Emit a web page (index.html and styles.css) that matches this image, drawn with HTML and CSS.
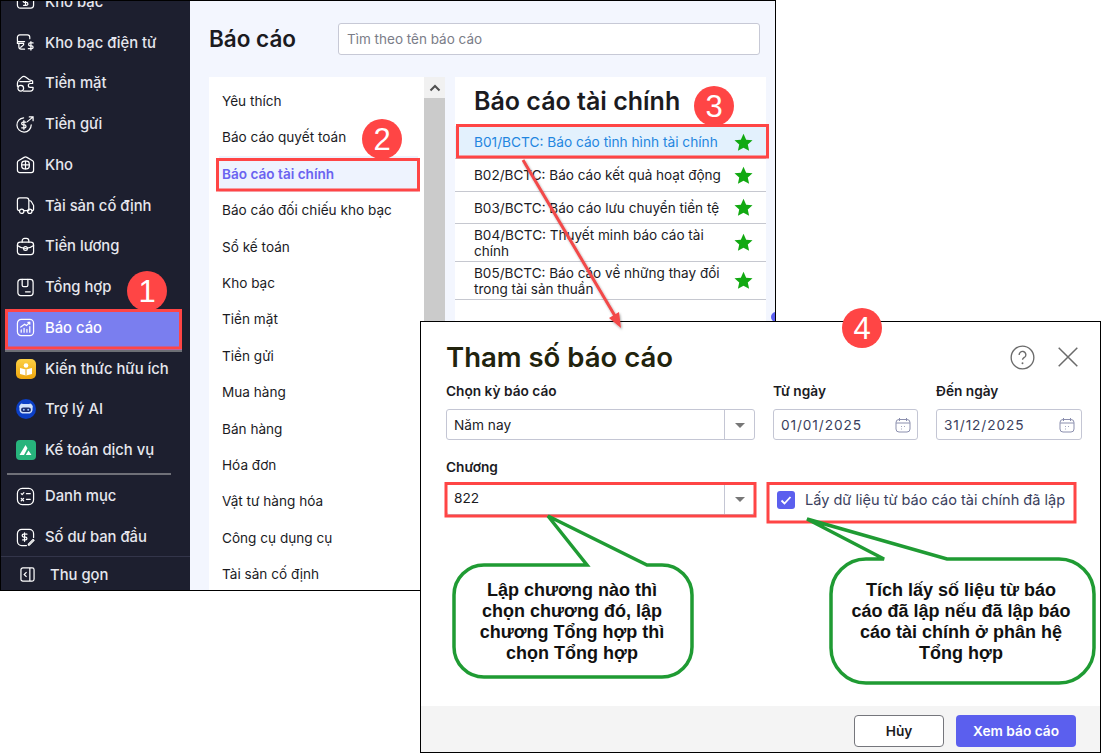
FILE: index.html
```html
<!DOCTYPE html>
<html lang="vi">
<head>
    <meta charset="UTF-8">
    <title>Báo cáo</title>
    <link rel="stylesheet" href="styles.css">
</head>
<body>
<div class="canvas">
    <div class="app">
        <nav class="sidebar">
            <div class="menu">
                <a class="menu-item"><svg class="ico" viewBox="0 0 20 20"><rect x="1.500" y="3" width="17" height="14" rx="3"/><path d="M10 6v8M12 8H9a1.200 1.200 0 000 3h2a1.200 1.200 0 010 3H8"/></svg>Kho bạc</a>
                <a class="menu-item"><svg class="ico" viewBox="0 0 20 20"><path d="M12 2H4a2.500 2.500 0 00-2.500 2.500V8a1 1 0 001 1h6.500M1.500 9v2H8v1.500L5 15M3 11v3.500A2.500 2.500 0 005.500 17H9M12 2a2.500 2.500 0 012.500 2.500V6"/><path d="M18 10.500h-3.200a1.500 1.500 0 000 3h1.700a1.500 1.500 0 010 3H13M15.700 9v9"/></svg>Kho bạc điện tử</a>
                <a class="menu-item"><svg class="ico" viewBox="0 0 20 20"><path d="M1.500 13V10c0-1.500.5-2.500 1.500-3.500l3-3c1.500-1.500 3-1.500 4.500 0L14 6c1 .5 2 .5 3.500 1.500v2.500h-2.500a2 2 0 000 4h3v1a3 3 0 01-3 3H8M4 8h11"/><circle cx="5" cy="15" r="3"/></svg>Tiền mặt</a>
                <a class="menu-item"><svg class="ico" viewBox="0 0 20 20"><path d="M16 10.500a7.500 7.500 0 11-8-7.500M12 7l6-5M14 2h4v4"/><path d="M10.500 7.500H7.500a1.200 1.200 0 000 3h1.500a1.200 1.200 0 010 3H6M8.300 6v9"/></svg>Tiền gửi</a>
                <a class="menu-item"><svg class="ico" viewBox="0 0 20 20"><path d="M1.500 16V8c0-1 .4-1.600 1-2L8.500 2.500a3 3 0 013 0L17.500 6c.6.400 1 1 1 2v8a2.500 2.500 0 01-2.500 2.500H4A2.500 2.500 0 011.500 16z"/><rect x="6" y="6.500" width="8" height="8" rx="3"/><path d="M10 6.500v8M6 10.500h8"/></svg>Kho</a>
                <a class="menu-item"><svg class="ico" viewBox="0 0 20 20"><path d="M3.500 15.500A2.300 2.300 0 011.500 13V4.500A2.500 2.500 0 014 2h7a2.500 2.500 0 012.500 2.500v11h-5M13.500 5h1.200c.6 0 1.100.3 1.400.8l2.400 4.200v4a1.500 1.500 0 01-1.500 1.500"/><circle cx="6" cy="16" r="2.300"/><circle cx="14.500" cy="16" r="2.300"/></svg>Tài sản cố định</a>
                <a class="menu-item"><svg class="ico" viewBox="0 0 20 20"><path d="M4.500 5.500h11a3 3 0 013 3v7a3 3 0 01-3 3h-11a3 3 0 01-3-3v-7a3 3 0 013-3z"/><path d="M6.500 5.500V4A2.500 2.500 0 019 1.500h2A2.500 2.500 0 0113.500 4v1.500M1.500 9c3 2.500 5 3 8.500 3s5.500-.5 8.500-3"/><circle cx="10" cy="12" r="2"/></svg>Tiền lương</a>
                <a class="menu-item"><svg class="ico" viewBox="0 0 20 20"><rect x="2" y="1.500" width="16" height="17" rx="3"/><path d="M6.500 1.500v6c0 1 .5 1.500 1.500 1.500h3c1 0 1.500-.5 1.500-1.500v-6M10 14.500h5"/></svg>Tổng hợp</a>
                <a class="menu-item active"><svg class="ico" viewBox="0 0 20 20"><rect x="1.500" y="1.500" width="17" height="17" rx="4"/><path d="M5.500 15v-2.500M8.500 15v-4M11.500 15v-3M14.500 15V9M5 9.500l4-3 2 1.500 3.500-3.500M12.500 4.500h2v2"/></svg>Báo cáo</a>
                <a class="menu-item"><svg class="ico-fill" viewBox="0 0 20 20"><defs><linearGradient id="gold" x1="0" y1="0" x2="0" y2="1"><stop offset="0" stop-color="#fdd044"/><stop offset="1" stop-color="#eda50e"/></linearGradient></defs><rect width="20" height="20" rx="5" fill="url(#gold)"/><path d="M4 9l6 1.500L16 9v6l-6 1.500L4 15z" fill="#fff"/><circle cx="10" cy="6.500" r="2.300" fill="#fff"/><path d="M10 10.500v6" stroke="#eda50e" stroke-width="1"/></svg>Kiến thức hữu ích</a>
                <a class="menu-item"><svg class="ico-fill" viewBox="0 0 20 20"><circle cx="10" cy="10" r="10" fill="#0b3fc6"/><path d="M4 6a2 2 0 013-1h6a2 2 0 013 1c1 1 1 2 .5 3 .5 3-1 5.500-3.500 5.500H7C4.500 14.500 3 12 3.500 9 3 8 3 7 4 6z" fill="#cfe0fb"/><rect x="5" y="8.500" width="10" height="4.500" rx="2.200" fill="#1a2a6b"/><circle cx="7.800" cy="10.700" r="1" fill="#9cc2ff"/><circle cx="12.200" cy="10.700" r="1" fill="#9cc2ff"/></svg>Trợ lý AI</a>
                <a class="menu-item"><svg class="ico-fill" viewBox="0 0 20 20"><rect width="20" height="20" rx="4" fill="#27b47c"/><path d="M3.500 15L9.500 5l2 3.300L8 15zM9.800 15l2.700-4.500L15.500 15z" fill="#fff"/></svg>Kế toán dịch vụ</a>
                <hr class="menu-line">
                <a class="menu-item"><svg class="ico" viewBox="0 0 20 20"><rect x="1.500" y="1.500" width="17" height="17" rx="5"/><path d="M5.500 7l1 1 1.800-2M11 7h4M5.500 14.500l2.500-2.500M5.500 12l2.500 2.500M11 13h4"/></svg>Danh mục</a>
                <a class="menu-item"><svg class="ico" viewBox="0 0 20 20"><path d="M11 18.500H6A4.500 4.500 0 011.500 14V6A4.500 4.500 0 016 1.500h8A4.500 4.500 0 0118.500 6v4"/><path d="M11.500 6.500H8a1.300 1.300 0 000 3h2a1.300 1.300 0 010 3H7M9 5v9M13 17l5-5 1 1-5 5h-1z"/></svg>Số dư ban đầu</a>
            </div>
            <a class="collapse"><svg class="ico-small" viewBox="0 0 16 16"><rect x="1" y="1" width="14" height="14" rx="2"/><path d="M10.500 1v14M7 5.500L4.500 8 7 10.500"/></svg>Thu gọn</a>
        </nav>

        <main class="content">
            <header class="content-head">
                <h1>Báo cáo</h1>
                <div class="search">Tìm theo tên báo cáo</div>
            </header>
            <div class="panels">
                <div class="group-panel">
                    <ul class="group-list">
                        <li>Yêu thích</li>
                        <li>Báo cáo quyết toán</li>
                        <li class="active">Báo cáo tài chính</li>
                        <li>Báo cáo đối chiếu kho bạc</li>
                        <li>Sổ kế toán</li>
                        <li>Kho bạc</li>
                        <li>Tiền mặt</li>
                        <li>Tiền gửi</li>
                        <li>Mua hàng</li>
                        <li>Bán hàng</li>
                        <li>Hóa đơn</li>
                        <li>Vật tư hàng hóa</li>
                        <li>Công cụ dụng cụ</li>
                        <li>Tài sản cố định</li>
                    </ul>
                    <div class="scrollbar"><span class="scroll-up"><svg viewBox="0 0 12 8"><path d="M1.500 6.500L6 2l4.500 4.500"/></svg></span></div>
                </div>
                <div class="report-panel">
                    <h2>Báo cáo tài chính</h2>
                    <div class="report-row active"><span>B01/BCTC: Báo cáo tình hình tài chính</span><svg class="star" viewBox="0 0 20 20"><path d="M10 .8l2.800 6.200 6.700.7-5 4.500 1.400 6.600L10 15.400l-5.900 3.400 1.400-6.600-5-4.500L7.200 7z"/></svg></div>
                    <div class="report-row"><span>B02/BCTC: Báo cáo kết quả hoạt động</span><svg class="star" viewBox="0 0 20 20"><path d="M10 .8l2.800 6.200 6.700.7-5 4.500 1.400 6.600L10 15.400l-5.900 3.400 1.400-6.600-5-4.500L7.200 7z"/></svg></div>
                    <div class="report-row short"><span>B03/BCTC: Báo cáo lưu chuyển tiền tệ</span><svg class="star" viewBox="0 0 20 20"><path d="M10 .8l2.800 6.200 6.700.7-5 4.500 1.400 6.600L10 15.400l-5.900 3.400 1.400-6.600-5-4.500L7.200 7z"/></svg></div>
                    <div class="report-row tall"><span>B04/BCTC: Thuyết minh báo cáo tài chính</span><svg class="star" viewBox="0 0 20 20"><path d="M10 .8l2.800 6.200 6.700.7-5 4.500 1.400 6.600L10 15.400l-5.900 3.400 1.400-6.600-5-4.500L7.200 7z"/></svg></div>
                    <div class="report-row tall"><span>B05/BCTC: Báo cáo về những thay đổi trong tài sản thuần</span><svg class="star" viewBox="0 0 20 20"><path d="M10 .8l2.800 6.200 6.700.7-5 4.500 1.400 6.600L10 15.400l-5.900 3.400 1.400-6.600-5-4.500L7.200 7z"/></svg></div>
                </div>
            </div>
            <span class="blue-dot"></span>
        </main>
    </div>

    <section class="dialog">
        <div class="dialog-body">
            <div class="dialog-head">
                <h3>Tham số báo cáo</h3>
                <div class="dialog-tools">
                    <svg class="tool-help" viewBox="0 0 26 26"><circle cx="13" cy="13" r="11.800"/><path d="M9.500 10.300a3.500 3.500 0 116.600 1.500c-.9 1.200-3.100 1.700-3.100 3.600"/><circle class="dot" cx="13" cy="19" r="1"/></svg>
                    <svg class="tool-close" viewBox="0 0 20 20"><path d="M.7.7l18.600 18.600M19.300.7L.7 19.300"/></svg>
                </div>
            </div>
            <div class="form-row">
                <div class="field wide">
                    <label>Chọn kỳ báo cáo</label>
                    <div class="combo"><span>Năm nay</span><i class="caret"></i></div>
                </div>
                <div class="field date">
                    <label>Từ ngày</label>
                    <div class="datebox"><span>01/01/2025</span><svg class="cal" viewBox="0 0 16 16"><rect x="1" y="2.500" width="14" height="12.500" rx="3"/><path d="M1 6h14M4.500 1v3M11.500 1v3M6 9.500h.8M9 9.500h.8M6 12h.8"/></svg></div>
                </div>
                <div class="field date">
                    <label>Đến ngày</label>
                    <div class="datebox"><span>31/12/2025</span><svg class="cal" viewBox="0 0 16 16"><rect x="1" y="2.500" width="14" height="12.500" rx="3"/><path d="M1 6h14M4.500 1v3M11.500 1v3M6 9.500h.8M9 9.500h.8M6 12h.8"/></svg></div>
                </div>
            </div>
            <div class="form-row second">
                <div class="field wide">
                    <label>Chương</label>
                    <div class="combo"><span>822</span><i class="caret"></i></div>
                </div>
                <div class="check">
                    <span class="checkbox"><svg viewBox="0 0 18 18"><path d="M4.500 9.500l3 3 6-6.500"/></svg></span>
                    Lấy dữ liệu từ báo cáo tài chính đã lập
                </div>
            </div>
        </div>
        <footer class="dialog-foot">
            <button class="btn">Hủy</button>
            <button class="btn primary">Xem báo cáo</button>
        </footer>
    </section>

    <svg class="marks" viewBox="0 0 1101 753">
        <defs>
            <filter id="soft" x="-20%" y="-20%" width="140%" height="140%"><feDropShadow dx="1" dy="1.500" stdDeviation="1.200" flood-color="#000" flood-opacity=".35"/></filter>
        </defs>
        <rect class="red-box" x="6.500" y="310.500" width="174" height="37.500"/>
        <rect class="red-box" x="217.500" y="159.500" width="201" height="30.500"/>
        <rect class="red-box" x="457.500" y="125.500" width="310" height="31.500"/>
        <rect class="red-box" x="446" y="483.500" width="309" height="32.500"/>
        <rect class="red-box" x="768" y="483.500" width="307" height="38.500"/>

        <g filter="url(#soft)">
            <path class="arrow-line" d="M523 160L615 316"/>
            <path class="arrow-head" d="M621 328L609 318L619 312z"/>
        </g>

        <circle class="badge" cx="147" cy="291" r="20"/><text class="badge-num" x="147" y="302">1</text>
        <circle class="badge" cx="382" cy="139" r="20"/><text class="badge-num" x="382" y="150">2</text>
        <circle class="badge" cx="714" cy="106" r="20"/><text class="badge-num" x="714" y="117">3</text>
        <circle class="badge" cx="862" cy="328" r="20"/><text class="badge-num" x="862" y="339">4</text>

        <path class="bubble" d="M548 516L587 565H484A30 30 0 00454 595V647A30 30 0 00484 677H662A30 30 0 00692 647V595A30 30 0 00662 565H647z"/>
        <text class="bubble-text" x="572" y="596">Lập chương nào thì</text>
        <text class="bubble-text" x="572" y="617">chọn chương đó, lập</text>
        <text class="bubble-text" x="572" y="638">chương Tổng hợp thì</text>
        <text class="bubble-text" x="572" y="659">chọn Tổng hợp</text>

        <path class="bubble" d="M807 519L884 559H866A35 35 0 00831 594V648A35 35 0 00866 683H1059A35 35 0 001094 648V594A35 35 0 001059 559H947z"/>
        <text class="bubble-text" x="961" y="596">Tích lấy số liệu từ báo</text>
        <text class="bubble-text" x="961" y="617">cáo đã lập nếu đã lập báo</text>
        <text class="bubble-text" x="961" y="638">cáo tài chính ở phân hệ</text>
        <text class="bubble-text" x="961" y="659">Tổng hợp</text>
    </svg>
</div>
</body>
</html>
```

FILE: styles.css
```css
* {
    box-sizing: border-box;
}

body {
    margin: 0;
    background: #fff;
    font-family: Inter, "Liberation Sans", sans-serif;
    color: #1b1b1f;
}

.canvas {
    position: relative;
    width: 1101px;
    height: 753px;
    overflow: hidden;
}

.app {
    display: flex;
    width: 776px;
    height: 591px;
    border: 1px solid #000;
    overflow: hidden;
}

/* sidebar */
.sidebar {
    display: flex;
    flex-direction: column;
    width: 189px;
    flex-shrink: 0;
    background: #1d1f2f;
    color: #e6e7ee;
    font-size: 14.800px;
    font-weight: 500;
}

.menu {
    flex: 1;
    min-height: 0;
    margin-top: -19.500px;
}

.menu-item {
    display: flex;
    align-items: center;
    gap: 10px;
    height: 40.750px;
    padding-left: 15px;
}

.menu-item.active {
    margin: 2px 8px -2px 4px;
    padding-left: 11px;
    padding-bottom: 4px;
    background: #7a7eef;
    color: #fff;
    box-shadow: 0 2px 0 #6d6f75;
}

.ico {
    width: 19px;
    height: 19px;
    fill: none;
    stroke: #fff;
    stroke-width: 1.300;
    stroke-linecap: round;
    stroke-linejoin: round;
    flex-shrink: 0;
}

.ico-fill {
    width: 20px;
    height: 20px;
    flex-shrink: 0;
    margin-right: -1px;
}

.menu-line {
    height: 2px;
    margin: 2.500px 19px 1px 6px;
    border: 0;
    background: #6f7078;
}

.collapse {
    display: flex;
    align-items: center;
    flex-shrink: 0;
    gap: 15px;
    height: 34px;
    padding-top: 2px;
    padding-left: 19px;
    border-top: 1px solid #33354a;
}

.ico-small {
    width: 15px;
    height: 15px;
    fill: none;
    stroke: #fff;
    stroke-width: 1.300;
}

/* content */
.content {
    position: relative;
    flex: 1;
    padding: 0 9px 0 19px;
    background: #f3f6fe;
}

.content-head {
    display: flex;
    align-items: center;
    height: 76px;
    padding-bottom: 1px;
}

.content-head h1 {
    width: 129px;
    margin: 0;
    font-size: 22.500px;
    font-weight: 600;
}

.search {
    width: 422px;
    height: 32px;
    padding-left: 8px;
    border: 1px solid #c7c9d6;
    border-radius: 3px;
    background: #fff;
    color: #7b7d88;
    font-size: 13.500px;
    line-height: 30px;
}

.panels {
    display: flex;
    gap: 10px;
    height: 514px;
}

.group-panel {
    display: flex;
    width: 236px;
    background: #fff;
}

.group-list {
    flex: 1;
    margin: 0;
    padding: 6px 6px 0 10px;
    list-style: none;
    font-size: 13.600px;
}

.group-list li {
    height: 36.400px;
    padding-left: 3px;
    line-height: 36px;
}

.group-list li.active {
    background: #eef3fe;
    color: #6a63f0;
    font-weight: 600;
}

.scrollbar {
    width: 21px;
    background: #cbcbcb;
}

.scroll-up {
    display: flex;
    align-items: center;
    justify-content: center;
    height: 21px;
    background: #f1f1f1;
}

.scroll-up svg {
    width: 12px;
    height: 8px;
    fill: none;
    stroke: #505050;
    stroke-width: 2;
}

.report-panel {
    width: 311px;
    background: #fff;
}

.report-panel h2 {
    height: 49px;
    margin: 0;
    padding-left: 19px;
    font-size: 25px;
    font-weight: 600;
    line-height: 49px;
}

.report-row {
    display: flex;
    align-items: center;
    justify-content: space-between;
    height: 33px;
    padding: 0 13px 0 19px;
    border-bottom: 1px solid #c6c8d0;
    font-size: 13.550px;
    line-height: 16px;
}

.report-row.short {
    height: 32px;
}

.report-row.tall {
    height: 38px;
}

.report-row span {
    width: 255px;
}

.report-row.active {
    background: #e3f1fd;
    color: #1f86e0;
    font-size: 13.700px;
}

.star {
    width: 19px;
    height: 19px;
    flex-shrink: 0;
    fill: #12a912;
}

.blue-dot {
    position: absolute;
    top: 311px;
    right: -6px;
    width: 10px;
    height: 10px;
    border-radius: 50%;
    background: #5b5fef;
}

/* dialog */
.dialog {
    position: absolute;
    left: 420px;
    top: 321px;
    display: flex;
    flex-direction: column;
    width: 681px;
    height: 432px;
    border: 1px solid #000;
    background: #fff;
}

.dialog-body {
    flex: 1;
    padding: 0 18px 0 25px;
}

.dialog-head {
    display: flex;
    align-items: center;
    justify-content: space-between;
    height: 60px;
    padding-top: 10px;
}

.dialog-head h3 {
    margin: 0;
    color: #22230d;
    font-size: 27.500px;
    font-weight: 600;
}

.dialog-tools {
    display: flex;
    align-items: center;
    gap: 23px;
    padding-right: 4px;
}

.tool-help {
    width: 25px;
    height: 25px;
    fill: none;
    stroke: #6b6b6b;
    stroke-width: 1.400;
}

.tool-help .dot {
    fill: #6b6b6b;
    stroke: none;
}

.tool-close {
    width: 20px;
    height: 20px;
    fill: none;
    stroke: #6b6b6b;
    stroke-width: 1.500;
}

.form-row {
    display: flex;
    gap: 18px;
}

.form-row.second {
    margin-top: 18px;
}

.form-row.second .field label {
    height: 24px;
}

.form-row.second .combo {
    height: 33px;
}

.form-row.second .combo span {
    padding-bottom: 2px;
}

.form-row.second .caret::after {
    top: 14px;
}

.field label {
    display: block;
    height: 27px;
    font-size: 13.700px;
    font-weight: 600;
    line-height: 18px;
}

.field.wide {
    width: 309px;
}

.field.date {
    width: 145px;
}

.field.date:last-child {
    width: 146px;
}

.combo,
.datebox {
    display: flex;
    align-items: center;
    height: 31px;
    border: 1px solid #c4c6d4;
    border-radius: 3px;
    font-size: 13.700px;
}

.combo span {
    flex: 1;
    padding-left: 7px;
}

.caret {
    position: relative;
    width: 30px;
    height: 100%;
    border-left: 1px solid #c4c6d4;
}

.caret::after {
    content: "";
    position: absolute;
    left: 10px;
    top: 13px;
    border: 5px solid transparent;
    border-top: 5px solid #777;
    border-bottom: 0;
}

.datebox {
    justify-content: space-between;
    padding: 0 6px 0 7px;
    color: #3b3f5e;
    letter-spacing: .9px;
}

.cal {
    width: 16px;
    height: 16px;
    fill: none;
    stroke: #8b8fae;
    stroke-width: 1;
}

.check {
    display: flex;
    align-items: center;
    gap: 10px;
    height: 31px;
    margin-top: 26px;
    padding-left: 4px;
    color: #3b3f5e;
    font-size: 14.550px;
}

.checkbox {
    width: 18px;
    height: 18px;
    border-radius: 3px;
    background: #5b5fee;
}

.checkbox svg {
    display: block;
    fill: none;
    stroke: #fff;
    stroke-width: 1.800;
}

.dialog-foot {
    display: flex;
    justify-content: flex-end;
    gap: 12px;
    height: 46px;
    padding: 9px 24px 0 0;
    background: #f4f4f4;
}

.btn {
    width: 90px;
    height: 32px;
    border: 1px solid #75767c;
    border-radius: 4px;
    background: #fff;
    color: #1b1b1f;
    font-family: inherit;
    font-size: 13.700px;
    font-weight: 600;
}

.btn.primary {
    width: 120px;
    border: 0;
    background: #5b5fee;
    color: #fff;
}

/* annotations drawn over the screenshot */
.marks {
    position: absolute;
    left: 0;
    top: 0;
    width: 1101px;
    height: 753px;
    pointer-events: none;
}

.red-box {
    fill: none;
    stroke: #ff4545;
    stroke-width: 3;
}

.arrow-line {
    fill: none;
    stroke: #f24848;
    stroke-width: 3;
}

.arrow-head {
    fill: #f24848;
}

.badge {
    fill: #ff4545;
}

.badge-num {
    fill: #fff;
    font-family: "Liberation Sans", sans-serif;
    font-size: 31px;
    text-anchor: middle;
}

.bubble {
    fill: #fff;
    stroke: #1f9b33;
    stroke-width: 3.500;
}

.bubble-text {
    fill: #111;
    font-family: "Liberation Sans", sans-serif;
    font-size: 18px;
    font-weight: 700;
    text-anchor: middle;
}
```
